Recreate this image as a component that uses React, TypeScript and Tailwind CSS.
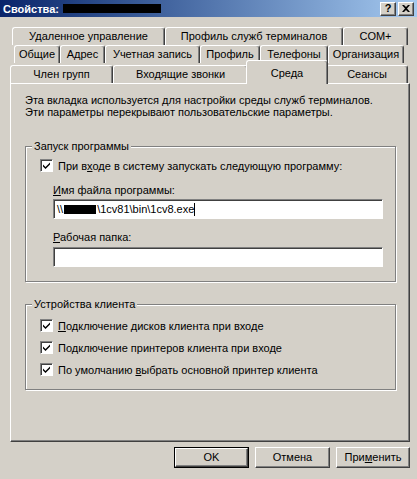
import type { ReactNode } from "react";

const raised =
  "border border-t-white border-l-white border-r-[#404040] border-b-[#404040] shadow-[inset_-1px_-1px_0_#808080] bg-[#d4d0c8]";
const sunken =
  "border border-t-[#808080] border-l-[#808080] border-r-white border-b-white shadow-[inset_1px_1px_0_#404040] bg-white";
const tab =
  "h-[18px] shrink-0 flex items-center justify-center border-t border-l border-white border-r border-r-[#404040] shadow-[inset_-1px_0_0_#808080] rounded-t-[3px] bg-[#d4d0c8]";

function Tab({ w, children }: { w: string; children: ReactNode }) {
  return <div className={`${tab} ${w}`}>{children}</div>;
}

function Check() {
  return (
    <div className={`w-[13px] h-[13px] shrink-0 ${sunken} flex items-center justify-center`}>
      <svg width="9" height="9" viewBox="0 0 9 9">
        <path d="M1 3.5 L3.5 6 L8 1.5 L8 3.5 L3.5 8 L1 5.5 Z" fill="#000" />
      </svg>
    </div>
  );
}

function CheckRow({ children }: { children: ReactNode }) {
  return (
    <div className="flex items-center gap-[5px] h-[13px]">
      <Check />
      <span className="leading-[12px]">{children}</span>
    </div>
  );
}

function Group({ label, className, children }: { label: string; className: string; children: ReactNode }) {
  return (
    <div
      className={`relative w-[371px] border border-[#808080] shadow-[1px_1px_0_white,inset_1px_1px_0_white] ${className}`}
    >
      <span className="absolute -top-[7px] left-[6px] px-[2px] bg-[#d4d0c8] leading-[12px]">{label}</span>
      {children}
    </div>
  );
}

export default function App() {
  return (
    <div className="w-[417px] h-[479px] bg-[#d4d0c8] text-black text-[11px] font-['Liberation_Sans',Arial,sans-serif] overflow-hidden select-none">
      {/* title bar */}
      <div className="h-[17px] flex items-center bg-gradient-to-r from-[#0a246a] to-[#a6caf0] pl-[3px] pr-[3px]">
        <span className="text-white font-bold leading-[12px]">Свойства:</span>
        <div className="ml-[4px] w-[98px] h-[9px] bg-black" />
        <div className="ml-auto flex gap-[2px]">
          <div className={`w-[16px] h-[14px] ${raised} flex items-center justify-center font-bold text-[11px] leading-none`}>?</div>
          <div className={`w-[16px] h-[14px] ${raised} flex items-center justify-center`}>
            <svg width="8" height="7" viewBox="0 0 8 7">
              <path d="M0 0 L2 0 L4 2 L6 0 L8 0 L5 3.5 L8 7 L6 7 L4 5 L2 7 L0 7 L3 3.5 Z" fill="#000" />
            </svg>
          </div>
        </div>
      </div>

      {/* tabs */}
      <div className="mt-[10px]">
        <div className="flex ml-[12px]">
          <Tab w="w-[153px]">Удаленное управление</Tab>
          <Tab w="w-[178px]">Профиль служб терминалов</Tab>
          <Tab w="w-[65px]">COM+</Tab>
        </div>
        <div className="flex ml-[14px]">
          <Tab w="w-[46px]">Общие</Tab>
          <Tab w="w-[45px]">Адрес</Tab>
          <Tab w="w-[95px]">Учетная запись</Tab>
          <Tab w="w-[60px]">Профиль</Tab>
          <Tab w="w-[68px]">Телефоны</Tab>
          <Tab w="w-[76px]">Организация</Tab>
        </div>
        <div className="flex items-end h-[20px] ml-[10px]">
          <Tab w="w-[103px]">Член групп</Tab>
          <Tab w="w-[135px]">Входящие звонки</Tab>
          <div className="relative z-10 -mx-[2px] -mb-[1px] w-[82px] h-[24px] shrink-0 flex justify-center pt-[4px] border-t border-l border-white border-r border-r-[#404040] shadow-[inset_-1px_0_0_#808080] rounded-t-[3px] bg-[#d4d0c8]">
            Среда
          </div>
          <Tab w="w-[82px]">Сеансы</Tab>
        </div>
      </div>

      {/* page */}
      <div className="ml-[10px] w-[400px] h-[359px] border border-t-white border-l-white border-r-[#404040] border-b-[#404040] shadow-[inset_-1px_-1px_0_#808080] pl-[14px] pt-[10px]">
        <p className="leading-[12px]">
          Эта вкладка используется для настройки среды служб терминалов.
          <br />
          Эти параметры перекрывают пользовательские параметры.
        </p>

        <Group label="Запуск программы" className="mt-[28px] pl-[14px] pt-[12px] pb-[14px]">
          <CheckRow>
            При в<span className="underline underline-offset-[1px]">х</span>оде в систему запускать следующую программу:
          </CheckRow>
          <div className="pl-[13px]">
            <div className="mt-[12px] leading-[12px]">
              <span className="underline underline-offset-[1px]">И</span>мя файла программы:
            </div>
            <div className={`mt-[3px] w-[330px] h-[20px] ${sunken} flex items-center pl-[3px]`}>
              <span>\\</span>
              <span className="inline-block w-[32px] h-[9px] bg-black mx-[1px]" />
              <span>\1cv81\bin\1cv8.exe</span>
              <span className="inline-block w-[1px] h-[13px] bg-black" />
            </div>
            <div className="mt-[12px] leading-[12px]">
              <span className="underline underline-offset-[1px]">Р</span>абочая папка:
            </div>
            <div className={`mt-[4px] w-[330px] h-[20px] ${sunken}`} />
          </div>
        </Group>

        <Group label="Устройства клиента" className="mt-[22px] pl-[14px] pt-[14px] pb-[13px] flex flex-col gap-[9px]">
          <CheckRow>
            <span className="underline underline-offset-[1px]">П</span>одключение дисков клиента при входе
          </CheckRow>
          <CheckRow>
            По<span className="underline underline-offset-[1px]">д</span>ключение принтеров клиента при входе
          </CheckRow>
          <CheckRow>
            По умолчанию <span className="underline underline-offset-[1px]">в</span>ыбрать основной принтер клиента
          </CheckRow>
        </Group>
      </div>

      {/* buttons */}
      <div className="mt-[5px] flex justify-end gap-[6px] pr-[7px]">
        <div className="w-[75px] h-[21px] border border-black">
          <div className={`w-full h-full ${raised} flex items-center justify-center`}>OK</div>
        </div>
        <div className={`w-[75px] h-[21px] ${raised} flex items-center justify-center`}>Отмена</div>
        <div className={`w-[74px] h-[21px] ${raised} flex items-center justify-center`}>
          При<span className="underline underline-offset-[1px]">м</span>енить
        </div>
      </div>
    </div>
  );
}
